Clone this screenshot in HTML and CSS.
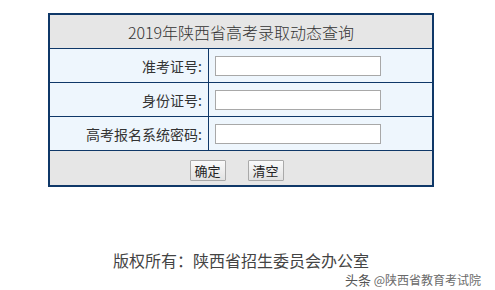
FILE: index.html
```html
<!DOCTYPE html>
<html lang="zh">
<head>
<meta charset="utf-8">
<link rel="stylesheet" href="styles.css">
</head>
<body>
<div class="page">
  <div class="panel">
    <table class="form">
      <tr><td class="title" colspan="2">2019年陕西省高考录取动态查询</td></tr>
      <tr><td class="label">准考证号:</td><td class="field"><input type="text" class="box"></td></tr>
      <tr><td class="label">身份证号:</td><td class="field"><input type="text" class="box"></td></tr>
      <tr><td class="label">高考报名系统密码:</td><td class="field"><input type="text" class="box"></td></tr>
      <tr><td class="actions" colspan="2"><button class="btn">确定</button><button class="btn">清空</button></td></tr>
    </table>
  </div>
  <div class="footer">版权所有：陕西省招生委员会办公室</div>
  <div class="watermark"><span class="wm-logo">头条</span> @陕西省教育考试院</div>
</div>
</body>
</html>
```
FILE: styles.css
```css
html, body { margin: 0; padding: 0; background: #fff; }
body { font-family: "Noto Sans CJK SC", "Noto Sans", sans-serif; color: #333; }
.page { position: relative; width: 495px; height: 290px; overflow: hidden; }
.panel {
  margin: 13px 0 0 48px;
  width: 382px;
  border: 2px solid #0f3868;
}
.form { width: 100%; border-collapse: collapse; }
.form td { padding: 0; }
.title {
  height: 33px;
  background: #e6e6e6;
  text-align: center;
  font-size: 16px;
  font-weight: 300;
  color: #333;
  border-bottom: 1px solid #0f3868;
}
.label {
  width: 152px;
  height: 33px;
  background: #eef6fd;
  text-align: right;
  padding-right: 6px !important;
  font-size: 14px;
  color: #333;
  border-right: 1px solid #0f3868;
  border-bottom: 1px solid #0f3868;
}
.field {
  background: #eef6fd;
  border-bottom: 1px solid #0f3868;
}
.box {
  display: block;
  margin-left: 6px;
  width: 166px;
  height: 20px;
  box-sizing: border-box;
  border: 1px solid #a8a8a8;
  background: #fff;
  padding: 0;
}
.actions {
  height: 34px;
  background: #e6e6e6;
  text-align: center;
  padding-right: 9px !important;
}
.btn {
  font-family: "Noto Sans CJK SC", sans-serif;
  font-size: 13px;
  color: #222;
  width: 36px;
  height: 21px;
  padding: 0;
  margin: 0 11px;
  border: 1px solid #a9a9a9;
  background: linear-gradient(#fafafa, #e2e2e2);
  border-radius: 1px;
  vertical-align: middle;
  line-height: 19px;
}
.footer {
  margin: 62px 0 0 48px;
  width: 386px;
  text-align: center;
  font-size: 16px;
  line-height: 22px;
  color: #444;
}
.watermark {
  position: absolute;
  left: 345px;
  top: 272px;
  font-size: 12px;
  line-height: 16px;
  color: #6a6a6a;
  text-shadow: 0 0 2px #fff, 0 0 2px #fff;
  white-space: nowrap;
}
.wm-logo { font-size: 13px; color: #555; }
```
